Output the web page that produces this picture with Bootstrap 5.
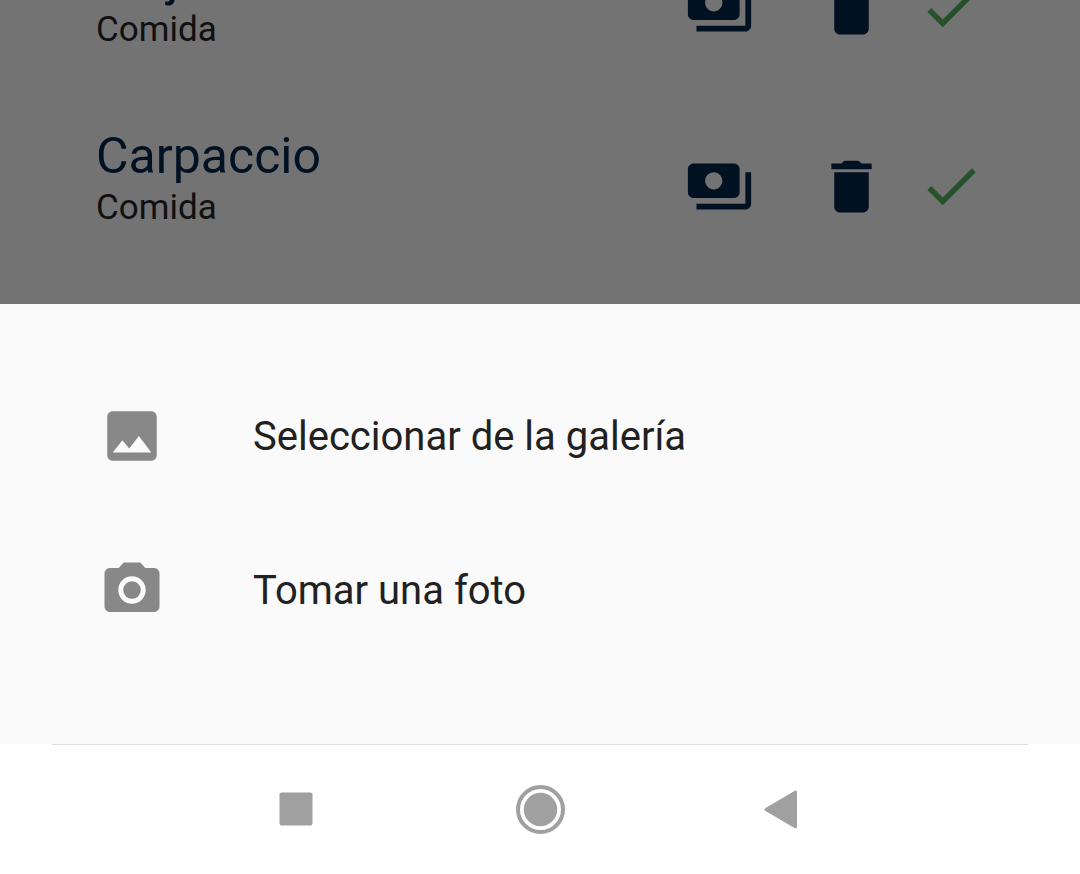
<!DOCTYPE html>
<html lang="es">
<head>
<meta charset="utf-8">
<meta name="viewport" content="width=device-width, initial-scale=1">
<title>Carta</title>
<link rel="stylesheet" href="https://cdn.jsdelivr.net/npm/bootstrap@5.3.0/dist/css/bootstrap.min.css">
<style>
body { font-family: Roboto, "Liberation Sans", sans-serif; background: #fff; }
.dimmed { background: #737373; height: 304px; padding: 0 96px 28px; }
.dish { height: 178px; }
.dish-text { padding-bottom: 18px; }
.dish-name { font-size: 50px; line-height: 60px; font-weight: 400; color: #001122; }
.dish-kind { font-size: 35px; line-height: 44px; color: #101010; }
.dish-actions { color: #001122; padding-bottom: 2px; }
.icon-btn { border: 0; padding: 0; background: none; color: inherit; display: block; }
.icon-btn svg, .option svg { display: block; fill: currentColor; }
.option svg { margin-bottom: 2px; }
.pay { margin-right: 63px; }
.remove { margin-right: 32px; }
.icon-btn.tick { color: #275229; }
.sheet { background: #fafafa; padding: 56px 0 76px; }
.option { border: 0; background: none; height: 154px; padding: 0 99px; gap: 88px; color: #888; }
.option-label { font-size: 40px; line-height: 48px; color: #212121; }
.sysbar { height: 130px; padding: 0 174px; }
.sysbar hr { left: 52px; right: 52px; color: #e0e0e0; }
.icon-btn.sys-btn { color: #a0a0a0; }
</style>
</head>
<body>
<main class="dimmed d-flex flex-column justify-content-end overflow-hidden">
  <article class="dish flex-shrink-0 d-flex align-items-center justify-content-between">
    <div class="dish-text">
      <h2 class="dish-name m-0">Majarete</h2>
      <p class="dish-kind m-0">Comida</p>
    </div>
    <div class="dish-actions d-flex align-items-center">
      <button class="icon-btn pay" type="button" aria-label="Precio"><svg width="69" height="69" viewBox="0 0 24 24"><path d="M19 14V6c0-1.1-.9-2-2-2H3c-1.1 0-2 .9-2 2v8c0 1.1.9 2 2 2h14c1.1 0 2-.9 2-2zm-9-1c-1.66 0-3-1.34-3-3s1.34-3 3-3 3 1.34 3 3-1.34 3-3 3zm13-6v11c0 1.1-.9 2-2 2H4v-2h17V7h2z"/></svg></button>
      <button class="icon-btn remove" type="button" aria-label="Eliminar"><svg width="69" height="69" viewBox="0 0 24 24"><path d="M6 19c0 1.1.9 2 2 2h8c1.1 0 2-.9 2-2V7H6v12zM19 4h-3.500l-.7-.7q-.3-.3-.8-.3h-4q-.5 0-.8.3l-.7.7H5v2h14V4z"/></svg></button>
      <button class="icon-btn tick" type="button" aria-label="Disponible"><svg width="66" height="66" viewBox="0 0 24 24"><path d="M9 16.17L4.83 12l-1.42 1.41L9 19 21 7l-1.41-1.41z"/></svg></button>
    </div>
  </article>
  <article class="dish flex-shrink-0 d-flex align-items-center justify-content-between">
    <div class="dish-text">
      <h2 class="dish-name m-0">Carpaccio</h2>
      <p class="dish-kind m-0">Comida</p>
    </div>
    <div class="dish-actions d-flex align-items-center">
      <button class="icon-btn pay" type="button" aria-label="Precio"><svg width="69" height="69" viewBox="0 0 24 24"><path d="M19 14V6c0-1.1-.9-2-2-2H3c-1.1 0-2 .9-2 2v8c0 1.1.9 2 2 2h14c1.1 0 2-.9 2-2zm-9-1c-1.66 0-3-1.34-3-3s1.34-3 3-3 3 1.34 3 3-1.34 3-3 3zm13-6v11c0 1.1-.9 2-2 2H4v-2h17V7h2z"/></svg></button>
      <button class="icon-btn remove" type="button" aria-label="Eliminar"><svg width="69" height="69" viewBox="0 0 24 24"><path d="M6 19c0 1.1.9 2 2 2h8c1.1 0 2-.9 2-2V7H6v12zM19 4h-3.500l-.7-.7q-.3-.3-.8-.3h-4q-.5 0-.8.3l-.7.7H5v2h14V4z"/></svg></button>
      <button class="icon-btn tick" type="button" aria-label="Disponible"><svg width="66" height="66" viewBox="0 0 24 24"><path d="M9 16.17L4.83 12l-1.42 1.41L9 19 21 7l-1.41-1.41z"/></svg></button>
    </div>
  </article>
</main>
<section class="sheet">
  <button class="option w-100 d-flex align-items-center" type="button">
    <svg width="66" height="66" viewBox="0 0 24 24"><path d="M21 19V5c0-1.1-.9-2-2-2H5c-1.1 0-2 .9-2 2v14c0 1.1.9 2 2 2h14c1.1 0 2-.9 2-2zM8.5 13.5l2.500 3.010L14.500 12l4.500 6H5l3.500-4.500z"/></svg>
    <span class="option-label">Seleccionar de la galería</span>
  </button>
  <button class="option w-100 d-flex align-items-center" type="button">
    <svg width="66" height="66" viewBox="0 0 24 24"><circle cx="12" cy="12" r="3.2"/><path d="M9 2L7.17 4H4c-1.1 0-2 .9-2 2v12c0 1.1.9 2 2 2h16c1.1 0 2-.9 2-2V6c0-1.1-.9-2-2-2h-3.17L15 2H9zm3 15c-2.76 0-5-2.24-5-5s2.24-5 5-5 5 2.24 5 5-2.24 5-5 5z"/></svg>
    <span class="option-label">Tomar una foto</span>
  </button>
</section>
<nav class="sysbar position-relative d-flex align-items-center" aria-label="Sistema">
  <hr class="position-absolute top-0 m-0 opacity-100">
  <button class="icon-btn sys-btn flex-fill d-flex justify-content-center" type="button" aria-label="Recientes"><svg width="50" height="50" viewBox="0 0 50 50"><rect x="8.500" y="8.500" width="33" height="33" rx="2"/></svg></button>
  <button class="icon-btn sys-btn flex-fill d-flex justify-content-center" type="button" aria-label="Inicio"><svg width="50" height="50" viewBox="0 0 50 50"><circle cx="25.500" cy="25.500" r="16.700"/><circle cx="25.500" cy="25.500" r="22.500" style="fill:none" stroke="currentColor" stroke-width="4"/></svg></button>
  <button class="icon-btn sys-btn flex-fill d-flex justify-content-center" type="button" aria-label="Atrás"><svg width="50" height="50" viewBox="0 0 50 50"><path d="M6.500 24Q4.500 25.500 6.500 27L35.500 44Q38 45 38 42V8.500Q38 5.500 35.500 7Z"/></svg></button>
</nav>
<script src="https://cdn.jsdelivr.net/npm/bootstrap@5.3.0/dist/js/bootstrap.bundle.min.js"></script>
</body>
</html>
